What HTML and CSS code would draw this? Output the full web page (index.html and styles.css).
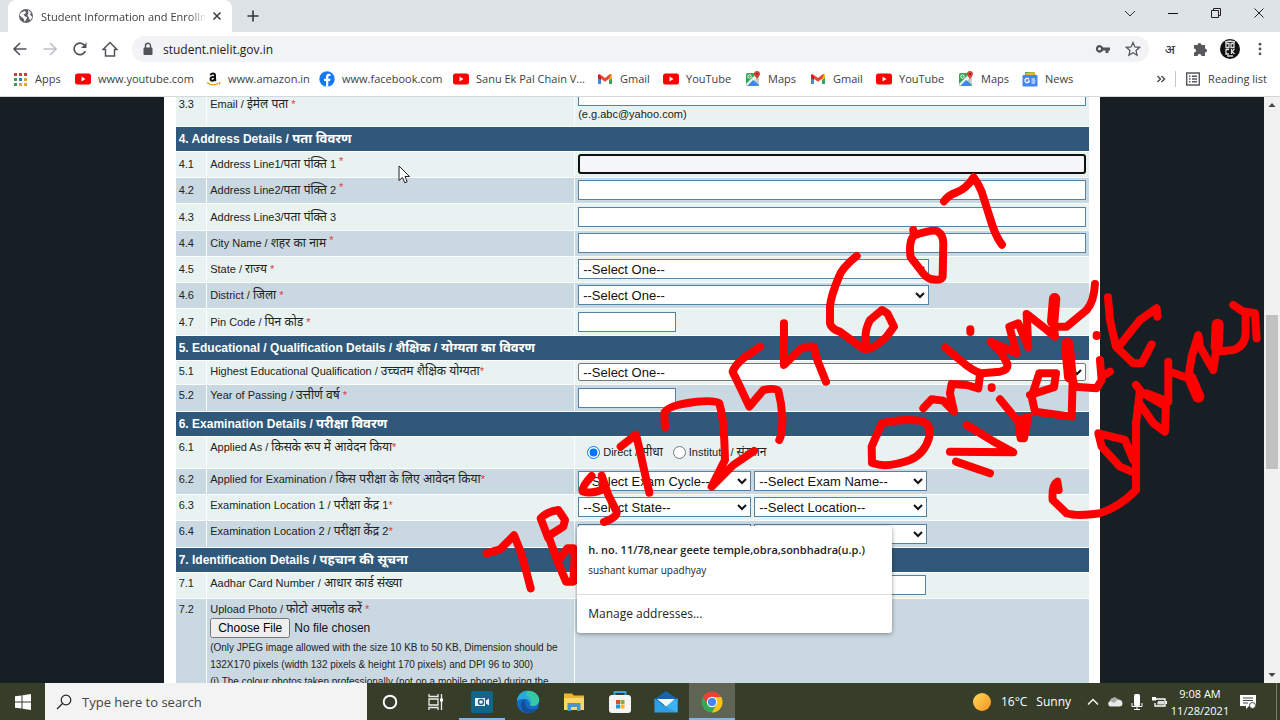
FILE: index.html
```html
<!DOCTYPE html>
<html lang="en">
<head>
<meta charset="utf-8">
<title>Student Information and Enrollment</title>
<link rel="stylesheet" href="styles.css">
</head>
<body>
<svg class="defs" aria-hidden="true">
  <symbol id="yt" viewBox="0 0 16 16"><rect y="2.500" width="16" height="11" rx="2.500" fill="#f00"/><path d="M6.500 5.500v5l4-2.500z" fill="#fff"/></symbol>
  <symbol id="gmail" viewBox="0 0 16 16"><path d="M1 4v9h3V7z" fill="#4285f4"/><path d="M15 4v9h-3V7z" fill="#34a853"/><path d="M12 4.500 15 3v4l-3 2.300z" fill="#fbbc04"/><path d="M1 3.500 2.500 3 8 7l5-4 1 .5-2 4.300L8 10.800 4 7.800z" fill="#ea4335"/><path d="M1 3.500 4 5.500v3.800L1 7z" fill="#c5221f"/></symbol>
  <symbol id="maps" viewBox="0 0 16 16"><rect x="1" y="2" width="13" height="13" rx="1.500" fill="#34a853"/><path d="M2 15 8 9l6 6z" fill="#4285f4"/><path d="M1 13 11 3l3 3-4.500 4L8 9l-6 6z" fill="#f1f3f4"/><path d="m9.500 10 4.500-4v8z" fill="#c8d0d5"/><circle cx="4.500" cy="5.500" r="1.700" fill="none" stroke="#fff"/><path d="M12 0a3 3 0 0 1 3 3c0 2-2.500 3-3 6-.5-3-3-4-3-6a3 3 0 0 1 3-3z" fill="#db4437"/><circle cx="12" cy="3" r="1" fill="#7b231c"/></symbol>
</svg>

<header class="browser">
  <div class="tabstrip">
    <div class="tab">
      <svg class="i16" viewBox="0 0 16 16"><circle cx="8" cy="8" r="7" fill="#5f6368"/><path d="M3 4.500 7 3l1 2-2.500 1.500L7 8.500 9 9l-.5 2-2 3L6 11 3 8.500 1.500 7zM10 2l3 2.500-1 2.500 1.500 1 .8 1-2 3.500L11 10 9.500 7l1-2z" fill="#fff"/></svg>
      <span class="tab-title">Student Information and Enrollm</span>
      <button class="tab-close" aria-label="Close tab"><svg class="i16" viewBox="0 0 16 16"><path d="m4.500 4.500 7 7m0-7-7 7" stroke="#3c4043" stroke-width="1.600"/></svg></button>
    </div>
    <button class="newtab" aria-label="New tab"><svg class="i16" viewBox="0 0 16 16"><path d="M8 2.500v11M2.500 8h11" stroke="#303438" stroke-width="1.600"/></svg></button>
    <div class="winbtns">
      <button aria-label="Search tabs"><svg class="i16" viewBox="0 0 16 16"><path d="m3 6 5 5 5-5" fill="none" stroke="#333"/></svg></button>
      <button aria-label="Minimize"><svg class="i16" viewBox="0 0 16 16"><path d="M3 8.500h10" stroke="#111"/></svg></button>
      <button aria-label="Restore"><svg class="i16" viewBox="0 0 16 16"><path d="M3.500 5.500h7v7h-7zM5.500 5.500v-2h7v7h-2" fill="none" stroke="#222"/></svg></button>
      <button aria-label="Close"><svg class="i16" viewBox="0 0 16 16"><path d="m3.500 3.500 9 9m0-9-9 9" stroke="#222"/></svg></button>
    </div>
  </div>
  <div class="toolbar">
    <button aria-label="Back"><svg class="i16" viewBox="0 0 16 16"><path d="M14.500 8H2m6-6L2 8l6 6" fill="none" stroke="#505357" stroke-width="1.600"/></svg></button>
    <button aria-label="Forward"><svg class="i16" viewBox="0 0 16 16"><path d="M1.500 8H14M8 2l6 6-6 6" fill="none" stroke="#bdc0c3" stroke-width="1.600"/></svg></button>
    <button aria-label="Reload"><svg class="i16" viewBox="0 0 16 16"><path d="M13.300 10A5.800 5.800 0 1 1 12.500 4.300" fill="none" stroke="#505357" stroke-width="1.700"/><path d="M14.500 1.500V7H9z" fill="#505357"/></svg></button>
    <button aria-label="Home"><svg class="i16" viewBox="0 0 16 16"><path d="M1 8.500 8 1.500l7 7h-2.500V15h-9V8.500z" fill="none" stroke="#505357" stroke-width="1.500"/></svg></button>
    <div class="omnibox">
      <svg class="i16" viewBox="0 0 16 16"><rect x="3.500" y="6.500" width="9" height="7.500" rx="1" fill="#505357"/><path d="M5.500 7V4.700a2.500 2.500 0 0 1 5 0V7" fill="none" stroke="#505357" stroke-width="1.400"/></svg>
      <input class="url" aria-label="Address bar" value="student.nielit.gov.in">
      <button aria-label="Passwords"><svg class="i16" viewBox="0 0 16 16"><path d="M4.500 4a3.800 3.800 0 0 1 3.600 2.500H15v3h-1.500V12h-3V9.500H8.100A3.800 3.800 0 1 1 4.500 4zm0 2.300a1.500 1.500 0 1 0 0 3 1.500 1.500 0 0 0 0-3z" fill="#505357"/></svg></button>
      <button aria-label="Bookmark this tab"><svg class="i16" viewBox="0 0 16 16"><path d="m8 1.500 1.900 4.400 4.800.4L11 9.500l1.100 4.700L8 11.700l-4.100 2.500L5 9.500 1.300 6.300l4.800-.4z" fill="none" stroke="#505357" stroke-width="1.200"/></svg></button>
    </div>
    <button class="ext" aria-label="Input tools">अ</button>
    <button aria-label="Extensions"><svg class="i16" viewBox="0 0 16 16"><path d="M2 4h3.500a2 2 0 1 1 4 0H13v3.500a2 2 0 1 1 0 4V15H9.500a2 2 0 1 0-4 0H2v-3.500a2 2 0 1 0 0-4z" fill="#55585c"/></svg></button>
    <button aria-label="Profile"><svg class="i20" viewBox="0 0 20 20"><circle cx="10" cy="10" r="10" fill="#111"/><path d="M6 4.500h3v4H6zm5 0h3v4h-3zM6 10.500h3M6 10v5h3m2.500-5v5m3-5L12 12.500 14.500 15M5 3l5-1 5 1M7 17h6" fill="none" stroke="#ddd" stroke-width="1.300"/></svg></button>
    <button aria-label="Menu"><svg class="i16" viewBox="0 0 16 16"><g fill="#505357"><circle cx="8" cy="3.200" r="1.400"/><circle cx="8" cy="8" r="1.400"/><circle cx="8" cy="12.800" r="1.400"/></g></svg></button>
  </div>
  <nav class="bookmarks">
    <div class="marks">
      <a href="#"><svg class="i16" viewBox="0 0 16 16"><path d="M2 2h3v3H2zM7 2h3v3H7zM12 2h3v3h-3z" fill="#c9403a"/><path d="M2 7h3v3H2z" fill="#3e9650"/><path d="M7 7h3v3H7z" fill="#3b78c9"/><path d="M12 7h3v3h-3z" fill="#dba02d"/><path d="M2 12h3v3H2z" fill="#3e9650"/><path d="M7 12h3v3H7zM12 12h3v3h-3z" fill="#e4a530"/></svg>Apps</a>
      <a href="#"><svg class="i16"><use href="#yt"/></svg>www.youtube.com</a>
      <a href="#"><svg class="i16" viewBox="0 0 16 16"><path d="M5.500 4.200C6 2 10 1.700 10 4.300V8q0 1 1 1.800M10 5.800c-3 0-4.500.7-4.500 2.300C5.500 10.500 9.500 10 10 7.500" fill="none" stroke="#111" stroke-width="2"/><path d="M2 11.500c4 3 8 3 11.500.8M14.500 11l.3 2.500" fill="none" stroke="#f29a1f" stroke-width="1.300"/></svg>www.amazon.in</a>
      <a href="#"><svg class="i16" viewBox="0 0 16 16"><circle cx="8" cy="8" r="7.700" fill="#1877f2"/><path d="M7 15.700V10H5V7.700h2V6c0-2.200 1.300-3.200 3-3.200l1.500.1v2h-1c-1 0-1.200.6-1.200 1.200v1.600h2.200L11.100 10H9.300v5.700z" fill="#fff"/></svg>www.facebook.com</a>
      <a href="#"><svg class="i16"><use href="#yt"/></svg>Sanu Ek Pal Chain V...</a>
      <a href="#"><svg class="i16"><use href="#gmail"/></svg>Gmail</a>
      <a href="#"><svg class="i16"><use href="#yt"/></svg>YouTube</a>
      <a href="#"><svg class="i16"><use href="#maps"/></svg>Maps</a>
      <a href="#"><svg class="i16"><use href="#gmail"/></svg>Gmail</a>
      <a href="#"><svg class="i16"><use href="#yt"/></svg>YouTube</a>
      <a href="#"><svg class="i16"><use href="#maps"/></svg>Maps</a>
      <a href="#"><svg class="i16" viewBox="0 0 16 16"><path d="M3 1h10v5H3z" fill="#4caf50"/><path d="m4 2 9-1 1 5H4z" fill="#e8b52e"/><rect x=".5" y="4" width="15" height="11.500" rx="1" fill="#4285f4"/><path d="M7 8.300a2.200 2.200 0 1 0 .3 1.700H5.500M9.500 8H13M9.500 10h4M9.500 12H13" fill="none" stroke="#fff" stroke-width="1.200"/></svg>News</a>
    </div>
    <button class="more" aria-label="More bookmarks"><svg class="i16" viewBox="0 0 16 16"><path d="m4.500 5 3 3-3 3m4-6 3 3-3 3" fill="none" stroke="#45484c" stroke-width="1.400"/></svg></button>
    <button class="reading"><svg class="i16" viewBox="0 0 16 16"><path d="M1.700 2h12.600v12H1.700z" fill="none" stroke="#55585c" stroke-width="1.400"/><path d="M4 5.200h1.500M4 8h1.500M4 10.800h1.500M7 5.200h5M7 8h5M7 10.800h5" stroke="#55585c" stroke-width="1.400"/></svg>Reading list</button>
  </nav>
</header>

<main class="viewport">
  <div class="canvas">
    <form class="page">
      <table class="form">
        <colgroup><col class="c-no"><col class="c-label"><col></colgroup>
        <tbody class="mid">
        <tr class="r-email"><td>3.3</td><td><label for="f33">Email / <span lang="hi">ईमेल पता</span> <i>*</i></label></td><td><input id="f33" class="full"><div>(e.g.abc@yahoo.com)</div></td></tr>
        <tr class="head"><th colspan="3">4. Address Details / <span lang="hi">पता विवरण</span></th></tr>
        <tr><td>4.1</td><td><label for="f41">Address Line1/<span lang="hi">पता पंक्ति</span> 1 <i class="up">*</i></label></td><td><input id="f41" class="full focused"></td></tr>
        <tr class="alt"><td>4.2</td><td><label for="f42">Address Line2/<span lang="hi">पता पंक्ति</span> 2 <i class="up">*</i></label></td><td><input id="f42" class="full"></td></tr>
        <tr class="tall"><td>4.3</td><td><label for="f43">Address Line3/<span lang="hi">पता पंक्ति</span> 3</label></td><td><input id="f43" class="full"></td></tr>
        <tr class="alt"><td>4.4</td><td><label for="f44">City Name / <span lang="hi">शहर का नाम</span> <i class="up">*</i></label></td><td><input id="f44" class="full"></td></tr>
        <tr><td>4.5</td><td><label for="f45">State / <span lang="hi">राज्य</span> <i>*</i></label></td><td><select id="f45" class="wide"><option>--Select One--</option></select></td></tr>
        <tr class="alt"><td>4.6</td><td><label for="f46">District / <span lang="hi">जिला</span> <i>*</i></label></td><td><select id="f46" class="wide"><option>--Select One--</option></select></td></tr>
        <tr class="tall"><td>4.7</td><td><label for="f47">Pin Code / <span lang="hi">पिन कोड</span> <i>*</i></label></td><td><input id="f47" class="short"></td></tr>
        </tbody>
        <tbody class="top">
        <tr class="head"><th colspan="3">5. Educational / Qualification Details / <span lang="hi">शैक्षिक / योग्यता का विवरण</span></th></tr>
        <tr class="low"><td>5.1</td><td><label for="f51">Highest Educational Qualification / <span lang="hi">उच्चतम शैक्षिक योग्यता</span><i>*</i></label></td><td><select id="f51" class="full plain"><option>--Select One--</option></select></td></tr>
        <tr class="alt tall"><td>5.2</td><td><label for="f52">Year of Passing / <span lang="hi">उत्तीर्ण वर्ष</span> <i>*</i></label></td><td><input id="f52" class="short"></td></tr>
        <tr class="head"><th colspan="3">6. Examination Details / <span lang="hi">परीक्षा विवरण</span></th></tr>
        <tr class="r-radio"><td>6.1</td><td>Applied As / <span lang="hi">किसके रूप में आवेदन किया</span><i>*</i></td><td><div class="radios"><input type="radio" name="as" id="d" checked><label for="d">Direct / <span lang="hi">सीधा</span></label><input type="radio" name="as" id="n"><label for="n">Institute / <span lang="hi">संस्थान</span></label></div></td></tr>
        <tr class="alt"><td>6.2</td><td>Applied for Examination / <span lang="hi">किस परीक्षा के लिए आवेदन किया</span><i>*</i></td><td><div class="pair"><select aria-label="Exam cycle"><option>--Select Exam Cycle--</option></select><select aria-label="Exam name"><option>--Select Exam Name--</option></select></div></td></tr>
        <tr><td>6.3</td><td>Examination Location 1 / <span lang="hi">परीक्षा केंद्र</span> 1<i>*</i></td><td><div class="pair"><select aria-label="State 1"><option>--Select State--</option></select><select aria-label="Location 1"><option>--Select Location--</option></select></div></td></tr>
        <tr class="alt tall"><td>6.4</td><td>Examination Location 2 / <span lang="hi">परीक्षा केंद्र</span> 2<i>*</i></td><td class="anchor"><div class="pair"><select aria-label="State 2"></select><select aria-label="Location 2"></select></div>
          <div class="popup"><button type="button" class="suggest"><b>h. no. 11/78,near geete temple,obra,sonbhadra(u.p.)</b><span>sushant kumar upadhyay</span></button><button type="button" class="manage">Manage addresses...</button></div></td></tr>
        <tr class="head"><th colspan="3">7. Identification Details / <span lang="hi">पहचान की सूचना</span></th></tr>
        <tr><td>7.1</td><td><label for="f71">Aadhar Card Number / <span lang="hi">आधार कार्ड संख्या</span></label></td><td><input id="f71" class="aadhar"></td></tr>
        <tr class="alt upload"><td>7.2</td><td><label for="f72">Upload Photo / <span lang="hi">फोटो अपलोड करें</span> <i>*</i></label><input type="file" id="f72"><p>(Only JPEG image allowed with the size 10 KB to 50 KB, Dimension should be 132X170 pixels (width 132 pixels &amp; height 170 pixels) and DPI 96 to 300)</p><p>(i) The colour photos taken professionally (not on a mobile phone) during the</p></td><td></td></tr>
        </tbody>
      </table>
    </form>
  </div>
  <div class="scrollbar">
    <svg viewBox="0 0 16 16"><path d="M4.500 10 8 6l3.500 4z" fill="#444"/></svg>
    <div class="track"><div class="thumb"></div></div>
    <svg viewBox="0 0 16 16"><path d="M4.500 6 8 10l3.500-4z" fill="#444"/></svg>
  </div>
</main>

<footer class="taskbar">
  <button class="start" aria-label="Start"><svg class="i16" viewBox="0 0 16 16"><path d="M0 2.300 6.500 1.400v6.100H0zM7.500 1.300 16 0v7.500H7.500zM0 8.500h6.500v6.100L0 13.700zM7.500 8.500H16V16l-8.500-1.300z" fill="#fff"/></svg></button>
  <label class="search"><svg class="i16" viewBox="0 0 16 16"><circle cx="10" cy="6" r="4.800" fill="none" stroke="#222" stroke-width="1.200"/><path d="M6.500 9.500 1 15" stroke="#222" stroke-width="1.300"/></svg><input placeholder="Type here to search" aria-label="Search"></label>
  <div class="apps">
    <button aria-label="Cortana"><svg class="i16" viewBox="0 0 16 16"><circle cx="8" cy="8" r="6.300" fill="none" stroke="#fff" stroke-width="1.900"/></svg></button>
    <button aria-label="Task view"><svg class="i16" viewBox="0 0 16 16"><path d="M1 0v2.500h9V0M1 5h9v6H1zM1 16v-2.500h9V16M13.500 0v16" fill="none" stroke="#eee" stroke-width="1.300"/><path d="M12 4.500h3v3h-3z" fill="#fff"/></svg></button>
    <button class="running" aria-label="Recorder"><svg class="i24" viewBox="0 0 24 24"><rect x="1" y="1" width="22" height="22" rx="2.500" fill="#12658a"/><path d="M5 8h10v8H5zM16 10.500l3-2v7l-3-2z" fill="#e8f4fa"/><circle cx="11" cy="12" r="3.200" fill="#12658a"/><circle cx="11" cy="12" r="1.800" fill="#e8f4fa"/></svg></button>
    <button aria-label="Edge"><svg class="i24" viewBox="0 0 24 24"><circle cx="12" cy="12" r="11.200" fill="#1769c4"/><path d="M1 11C2 4 7 .8 12 .8c7 0 11.500 4.700 11.200 9.700-.3 3.500-3 5.500-6 5.500-2.700 0-3.700-1-3-2.300C16 10 13 7 9 7c-4 0-7 2-8 4z" fill="#35c9a7"/><path d="M1 11C2 4 7 .8 12 .8 9 3 10 6 13 7.500c3 2 2.500 4.500 1.200 6.200-.7-3-3-4.700-6.200-4.700-3 0-6 .5-7 2z" fill="#2aa9dc"/><path d="M9.500 9c-2 5 1 10.500 7 10.500 2 0 4-.5 5.500-1.500-3 5-9 6.300-13.500 4C4 19.500 3.500 11 9.500 9z" fill="#124f9b"/></svg></button>
    <button aria-label="File Explorer"><svg class="i24" viewBox="0 0 24 24"><path d="M2 3.500h8l2 2h10v14.500H2z" fill="#f0b32e"/><path d="M2 8h20v12H2z" fill="#ffd766"/><path d="M5.500 21v-8h13v8H15v-4H9v4z" fill="#4a95cc"/></svg></button>
    <button aria-label="Microsoft Store"><svg class="i24" viewBox="0 0 24 24"><path d="M6.500 7V2h11v5" fill="none" stroke="#37a9e0" stroke-width="1.800"/><rect x="1" y="5" width="22" height="18" rx="3" fill="#f5f5f3"/><path d="M8 10h4v4H8z" fill="#e04b2b"/><path d="M12.500 10h4v4h-4z" fill="#7cb342"/><path d="M8 14.500h4v4H8z" fill="#2196d8"/><path d="M12.500 14.500h4v4h-4z" fill="#f6b820"/></svg></button>
    <button aria-label="Mail"><svg class="i24" viewBox="0 0 24 24"><path d="M.5 9 12 1l11.500 8v4H.5z" fill="#1565ae"/><path d="M.5 8.500v14h23v-14L12 17z" fill="#2d9fe5"/><path d="m10 15.500 13.500-7v14z" fill="#3cb4f0"/><path d="M3 9h18l-9 7.500z" fill="#f3f8fc"/></svg></button>
    <button class="running active" aria-label="Chrome"><svg class="i24" viewBox="0 0 24 24"><circle cx="12" cy="12" r="10.500" fill="#34a853"/><path d="M12 12 2.900 6.700A10.500 10.500 0 0 1 21.100 6.700z" fill="#e94235"/><path d="M12 7h9.300A10.500 10.500 0 0 1 12 22.500l4.500-8z" fill="#fbc116"/><path d="M2.900 6.700 7.500 14.500 12 7z" fill="#e94235"/><circle cx="12" cy="12" r="5.200" fill="#fff"/><circle cx="12" cy="12" r="4.100" fill="#4285f4"/></svg></button>
  </div>
  <div class="tray">
    <button class="weather"><svg class="i20" viewBox="0 0 20 20"><defs><linearGradient id="sun" x2="1" y2="1"><stop stop-color="#ffd95c"/><stop offset="1" stop-color="#f7931e"/></linearGradient></defs><circle cx="10" cy="10" r="9" fill="url(#sun)"/></svg><span>16°C</span><span>Sunny</span></button>
    <button class="t" aria-label="Show hidden icons"><svg class="i16" viewBox="0 0 16 16"><path d="m3 10.500 5-5 5 5" fill="none" stroke="#fff" stroke-width="1.300"/></svg></button>
    <button class="t" aria-label="OneDrive"><svg class="i16" viewBox="0 0 16 16"><path d="M3 12.500a3 3 0 0 1 0-5.500 4.500 4.500 0 0 1 8-1.500 4 4 0 0 1 4.500 4 3 3 0 0 1-3 3z" fill="#e8e8e6"/><path d="M3 7a4.500 4.500 0 0 1 8-1.500L7 9z" fill="#aaa"/></svg></button>
    <button class="t" aria-label="Microphone"><svg class="i16" viewBox="0 0 16 16"><rect x="5" y="0" width="6" height="12" rx="1.500" fill="#fff"/><path d="M3 9v3.500h10V9M8 12.500V16M5 15.500h6" fill="none" stroke="#fff"/></svg></button>
    <button class="t" aria-label="Battery"><svg class="i16" viewBox="0 0 16 16"><path d="M5 5h9v7H4V9" fill="none" stroke="#fff" stroke-width="1.300"/><path d="M7 7h6v3.500H6z" fill="#ddd"/><path d="M14.500 7v3H16V7zM1 3h4v3.500H1z" fill="#fff"/></svg></button>
    <button class="clock"><span>9:08 AM</span><span>11/28/2021</span></button>
    <button class="notes" aria-label="Notifications"><svg class="i16" viewBox="0 0 16 16"><path d="M0 1h16v11H9l-3 3v-3H0z" fill="#fff"/><path d="M3 4h10M3 6.500h10M3 9h5" stroke="#444"/><circle cx="12.500" cy="11.500" r="3" fill="#fff" stroke="#444"/></svg></button>
  </div>
</footer>

<svg class="ink" viewBox="0 0 1280 720" aria-hidden="true">
  <g transform="translate(480 340) scale(.3333)">
    <path d="M912-50V75L960 28Q990 15 1002 22L1012 60 1038 125"/>
    <path d="M840 20 790 55Q765 75 758 95L780 140 808 200 850 150Q885 143 895 152 905 190 907 230 908 280 898 300"/>
    <path d="M555 262 553 220Q560 195 650 185 710 180 718 190 730 230 733 300L735 360 695 440 760 375 822 333"/>
    <path d="M422 320 468 284Q480 330 490 380L508 458"/>
    <path d="M335 408Q305 440 308 454 335 462 365 450L372 430 365 407 385 465 410 515Q412 532 372 546"/>
    <path d="M205 595 182 535Q200 515 235 510L255 540 250 560 205 588 235 670 258 725 280 725 284 650 280 625 262 625 232 665"/>
    <path d="M20 640 60 628 102 586 120 630 135 680 152 745"/>
  </g>
  <g transform="translate(800 160) scale(.3333)">
    <path d="M432 124Q445 105 470 97 500 85 521 52 535 70 545 95L575 190Q590 235 606 254"/>
    <path d="M340 210 342 226Q400 207 412 214 430 225 430 250L428 350Q425 362 395 358 375 352 362 330L332 292Q325 245 342 226"/>
    <path d="M170 288Q125 325 117 350 92 410 90 440V490Q95 508 120 515L190 566Q210 576 260 530L282 500 262 460 246 450 210 480Q192 515 198 545"/>
    <path d="M216 908 215 860 245 790Q300 775 360 782 395 790 388 830 375 880 330 900 260 925 220 910"/>
    <path d="M370 745 395 718 430 722 462 755 450 700 455 672 500 675 535 685 540 645"/>
    <path d="M436 563 480 600Q520 635 545 640L600 635Q625 630 622 612L605 580 572 545 650 580 628 500 655 490 685 562 680 462 735 505 765 530 762 500 800 500 860 450Q882 425 885 372"/>
    <path d="M764 416 758 485" stroke-width="34"/>
    <path d="M511 508v8M575 682v2M890 525v3"/>
    <path d="M450 875 640 877 590 850 500 795M468 905 570 940M600 718 655 785 662 835 672 835 685 770 660 780"/>
    <path d="M690 705 762 682 768 640 718 640 695 710 705 755 815 770 818 660"/>
    <path d="M802 552 811 650" stroke-width="38"/>
    <path d="M812 640 825 680 890 685 905 660 900 600M905 650 930 635"/>
    <path d="M924 412 930 480 948 560 1000 610 1025 610 1055 553M952 565 1020 480 1070 445 1072 470"/>
    <path d="M776 990 772 965Q755 975 758 1020L800 1060Q830 1070 900 1060 960 1040 1008 990V790L1020 690 1008 675"/>
    <path d="M1000 900 975 840 895 820 905 860 960 920 995 935"/>
    <path d="M1022 735 1060 790 1095 815 1098 740 1030 700M1105 605V725L1040 700M1110 635 1165 655M1165 655 1175 590 1195 525 1200 560 1240 630 1248 575 1300 570Q1335 560 1337 520V460L1300 435M1335 455 1365 460 1370 535"/>
    <path d="M1172 655 1195 710M1253 494 1250 562" stroke-width="36"/>
  </g>
</svg>
<svg class="cursor" viewBox="0 0 12 19" aria-hidden="true"><path d="M1 1v14.500l3.500-3 2.300 5.300 2.400-1L7 11.500h4.500z" fill="#fff" stroke="#222"/></svg>
</body>
</html>
```
FILE: styles.css
```css
* { box-sizing: border-box; }
body {
  margin: 0;
  height: 100vh;
  display: flex;
  flex-direction: column;
  overflow: hidden;
  position: relative;
  font-family: "Open Sans", "Noto Sans", sans-serif;
  font-size: 11px;
  color: #3c4043;
}
button { font: inherit; color: inherit; border: 0; padding: 0; background: none; display: flex; align-items: center; justify-content: center; }
.defs { display: none; }
svg { flex: none; display: block; }
.i16 { width: 16px; height: 16px; }
.i20 { width: 20px; height: 20px; }
.i24 { width: 24px; height: 24px; }

/* Browser chrome */
.browser { flex: none; background: #fff; border-bottom: 1px solid #d5d7d9; }
.tabstrip { height: 32px; background: #dee3e7; display: flex; align-items: stretch; padding-left: 8px; }
.tab { width: 224px; background: #fff; border-radius: 8px 8px 0 0; display: flex; align-items: center; padding: 0 7px 0 10px; gap: 7px; }
.tab-title { flex: 1; overflow: hidden; white-space: nowrap; margin-right: -4px; mask-image: linear-gradient(90deg, #000 90%, transparent); }
.newtab { width: 42px; }
.winbtns { margin-left: auto; display: flex; padding-bottom: 6px; }
.winbtns button { width: 43px; }
.toolbar { height: 34px; display: flex; align-items: center; padding: 0 5px; }
.toolbar > button { width: 30px; height: 30px; }
.omnibox { flex: 1; margin: 0 6px 0 7px; height: 26px; border-radius: 13px; background: #f1f3f4; display: flex; align-items: center; padding: 0 8px; gap: 7px; }
.omnibox button { width: 16px; margin-left: 7px; }
.url { flex: 1; border: 0; background: none; font: 12px "Open Sans", sans-serif; color: #202124; padding: 0; outline: 0; }
.toolbar > .ext { font-size: 13px; font-weight: 500; }
.bookmarks { height: 30px; display: flex; align-items: center; padding: 0 13px 5px 12px; }
.marks { flex: 1; display: grid; grid-template-columns: 63px 130px 114px 134px 144px 66px 82px 65px 66px 82px 64px auto; }
.marks a { display: flex; align-items: center; gap: 7px; color: inherit; text-decoration: none; white-space: nowrap; }
.more { width: 24px; height: 16px; border-right: 1px solid #c4c7ca; padding-right: 6px; }
.reading { padding-left: 9px; gap: 7px; white-space: nowrap; }

/* Page area */
.viewport { flex: 1; min-height: 0; display: flex; background: #171f25; }
.canvas { flex: 1; overflow: hidden; }
.page { width: 74.1%; margin: -15px auto 0; padding: 0 11px 0 12px; background: #fff; font-family: "Liberation Sans", "Noto Sans", sans-serif; color: #222; }
.form { width: 100%; border-collapse: collapse; table-layout: fixed; line-height: 16px; }
.form [lang="hi"] { font-size: 12px; line-height: 12px; }
.form th [lang="hi"] { font-size: 13px; }
.c-no { width: 31px; }
.c-label { width: 368px; }
.form tr { height: 26px; background: #e8f2f0; }
.form tr.alt { background: #cad8e2; }
.form tr.tall { height: 27px; }
.form tr.low { height: 24px; }
.form tr.r-email { height: 44px; }
.form tr.r-radio { height: 32px; }
.form tr.head { height: 25px; background: #30587a; color: #fff; }
.form th { text-align: left; font-size: 12px; padding: 0 3px; white-space: nowrap; border-bottom: 1px solid #fff; }
.form td { padding: 0 3px; border-bottom: 1px solid #fbfdfd; border-right: 1px solid #fbfdfd; }
.form td:last-child { border-right: 0; }
.top td { vertical-align: top; padding-top: 2px; }
.top td:last-child { vertical-align: middle; padding-top: 0; }
.form i { color: #e03a3a; font-style: normal; }
.form .up { vertical-align: 3px; line-height: 8px; }
.form input, .form select { font: 13px "Liberation Sans", sans-serif; color: #111; }
.form input:not([type]), .form select { height: 20px; border: 1px solid #5283a8; background: #fff; border-radius: 0; display: block; margin: 0; outline: 0; }
.form .full { width: 100%; }
.form input.focused:not([type]) { border: 2px solid #101010; border-radius: 3px; background: #f5f6f7; }
.form .wide { width: 351px; }
.form .short { width: 98px; }
.form .aadhar { width: 348px; }
.form select.plain { height: 18px; border-color: #777; border-radius: 2px; }
.pair { display: flex; gap: 3px; }
.pair select { width: 173px; }
.radios { display: flex; align-items: center; padding-left: 9px; }
.radios input { margin: 0 3px 0 0; }
.radios label { margin-right: 10px; }
.upload label, .upload input, .upload p { display: block; margin: 0; }
.form .upload input { height: 20px; margin: 1px 0; font-size: 12px; }
.upload p { font-size: 10px; line-height: 17px; }
.form .upload { height: 110px; }

/* Autofill popup */
.form .anchor { position: relative; }
.popup { position: absolute; z-index: 3; left: 2px; top: 5px; width: 315px; background: #fff; border-radius: 3px; box-shadow: 0 1px 4px #0006; font-family: "Open Sans", sans-serif; }
.popup button { width: 100%; padding: 0 11px; align-items: flex-start; flex-direction: column; text-align: left; white-space: nowrap; }
.popup .suggest { height: 69px; gap: 4px; border-bottom: 1px solid #ddd; }
.suggest b { font-size: 11px; font-weight: 600; }
.suggest span { font-size: 10px; }
.popup .manage { height: 38px; font-size: 12px; justify-content: center; }

.scrollbar { width: 16px; background: #f1f1f1; display: flex; flex-direction: column; }
.scrollbar svg { width: 16px; height: 16px; }
.track { flex: 1; padding: 0 2px; display: flex; flex-direction: column; }
.track::before { content: ""; flex: 202; }
.track::after { content: ""; flex: 198; }
.thumb { flex: 154; background: #c1c1c1; }

/* Taskbar */
.taskbar { flex: none; height: 37px; background: #363d28; color: #fff; display: flex; align-items: stretch; }
.start { width: 45px; }
.search { flex: 0 1 322px; background: #f3f3f3; display: flex; align-items: center; padding-left: 11px; gap: 10px; }
.search input { border: 0; background: none; padding: 0; font: 13px "Open Sans", sans-serif; min-width: 0; flex: 1; }
.search input::placeholder { color: #444; }
.apps { display: flex; }
.apps button { width: 46px; border-bottom: 2px solid transparent; border-top: 2px solid transparent; }
.apps .running { border-bottom-color: #76b9ed; }
.apps .active { background: #5f6454; border-top-color: #5f6454; }
.tray { margin: 0 3px 0 auto; padding-right: 10px; border-right: 1px solid #777c6c; display: flex; }
.weather { gap: 9px; font-size: 12px; margin-right: 11px; white-space: nowrap; }
.t { width: 22px; }
.clock { flex-direction: column; width: 60px; line-height: 17px; }
.notes { width: 36px; }

/* Freehand annotation over the screen */
.ink { position: absolute; z-index: 2; left: 0; top: 0; width: 1280px; height: 720px; pointer-events: none; fill: none; stroke: #f00; stroke-width: 24; stroke-linecap: round; stroke-linejoin: round; }
.cursor { position: absolute; z-index: 2; left: 398px; top: 165px; width: 12px; height: 19px; pointer-events: none; }
```
